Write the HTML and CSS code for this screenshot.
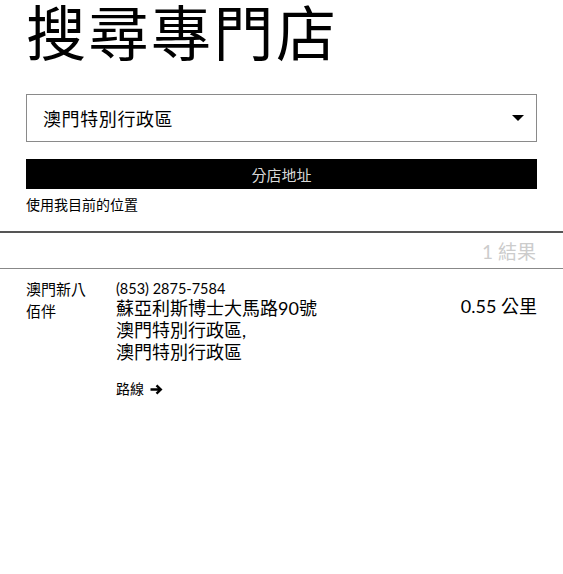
FILE: index.html
```html
<!DOCTYPE html>
<html lang="zh-Hant">
<head>
<meta charset="utf-8">
<link rel="stylesheet" href="styles.css">
</head>
<body>
<div class="top">
  <h1 class="title">搜尋專門店</h1>
  <div class="select">
    <span class="select-text">澳門特別行政區</span>
    <span class="caret"></span>
  </div>
  <div class="btn">分店地址</div>
  <div class="locate">使用我目前的位置</div>
</div>
<div class="results-bar"><span class="count">1 結果</span></div>
<div class="result">
  <div class="name">澳門新八佰伴</div>
  <div class="info">
    <div class="phone">(853) 2875-7584</div>
    <div class="addr">蘇亞利斯博士大馬路90號<br>澳門特別行政區,<br>澳門特別行政區</div>
    <div class="route">路線 <svg class="arrow" width="13" height="11" viewBox="0 0 13 11"><path d="M0.5 5.5H10.5M6.5 1.3L10.8 5.5L6.5 9.7" fill="none" stroke="#000" stroke-width="2.4"/></svg></div>
  </div>
  <div class="dist">0.55 公里</div>
</div>
</body>
</html>
```
FILE: styles.css
```css
html, body {
  margin: 0;
  padding: 0;
  background: #fff;
}
body {
  font-family: "Lato", "Noto Sans CJK TC", sans-serif;
  color: #000;
}
.top {
  padding: 0 26px;
}
.title {
  margin: 0;
  font-size: 60px;
  font-weight: 400;
  line-height: 66px;
  letter-spacing: 2.5px;
}
.select {
  margin-top: 28px;
  height: 46px;
  border: 1px solid #8a8a8a;
  display: flex;
  align-items: center;
  justify-content: space-between;
  padding: 0 12px 0 16px;
}
.select-text {
  font-size: 18px;
  letter-spacing: 0.6px;
}
.caret {
  width: 0;
  height: 0;
  border-left: 6px solid transparent;
  border-right: 6px solid transparent;
  border-top: 6px solid #000;
}
.btn {
  margin-top: 17px;
  height: 30px;
  background: #000;
  color: #d8d8d8;
  font-size: 15px;
  display: flex;
  align-items: center;
  justify-content: center;
}
.locate {
  font-size: 14px;
  margin-top: 6px;
  line-height: 20px;
}
.results-bar {
  margin-top: 16px;
  border-top: 2px solid #555;
  border-bottom: 1px solid #888;
  height: 35px;
  display: flex;
  align-items: center;
  justify-content: flex-end;
  padding: 0 27px;
}
.count {
  font-size: 19px;
  color: #ccc;
}
.result {
  display: flex;
  padding: 9px 26px 0 26px;
}
.name {
  width: 62px;
  font-size: 15px;
  line-height: 22px;
  margin-right: 28px;
}
.info {
  flex: 1;
}
.phone {
  font-size: 14.5px;
  line-height: 22px;
}
.addr {
  font-size: 18px;
  line-height: 22px;
  margin-top: -3px;
}
.route {
  font-size: 14px;
  margin-top: 15px;
  line-height: 22px;
  display: flex;
  align-items: center;
  gap: 6px;
}
.arrow {
  display: block;
}
.dist {
  font-size: 18px;
  line-height: 22px;
  margin-top: 17px;
}
```
